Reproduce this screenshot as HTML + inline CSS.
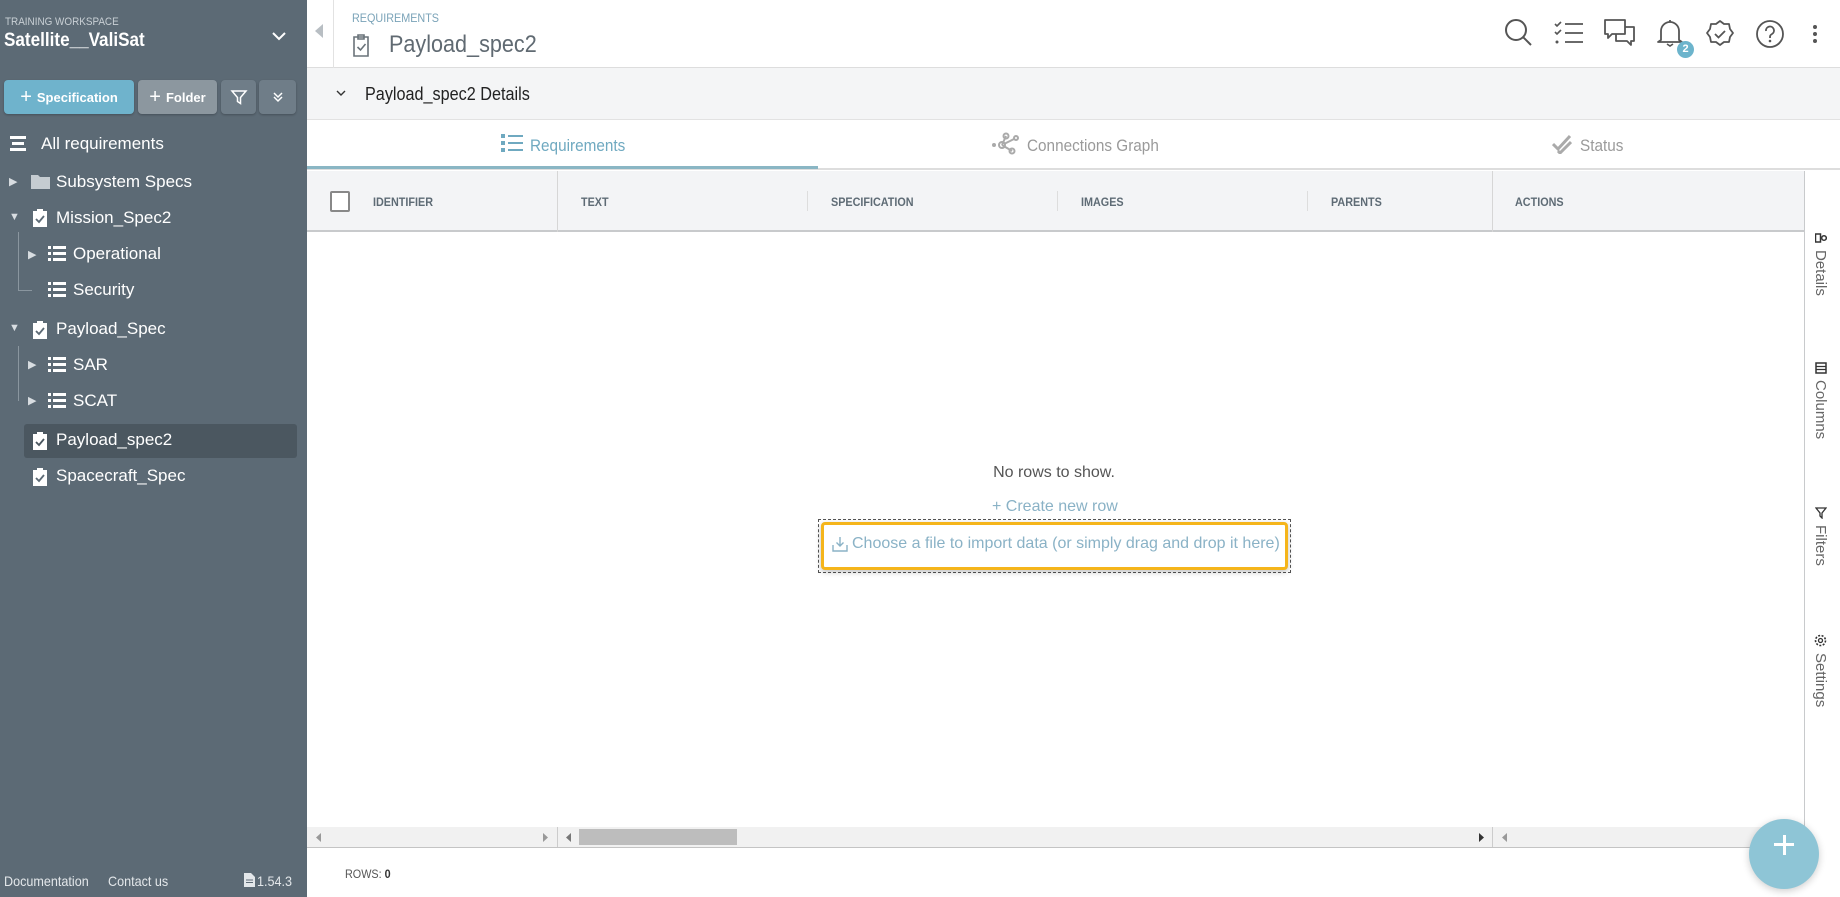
<!DOCTYPE html>
<html><head><meta charset="utf-8"><style>
*{box-sizing:border-box;margin:0;padding:0}
body{width:1840px;height:897px;overflow:hidden;font-family:"Liberation Sans",sans-serif;background:#fff;position:relative;color:#333}
.a{position:absolute}
#sb{left:0;top:0;width:307px;height:897px;background:#5c6a75;color:#fff}
.btn{position:absolute;top:80px;height:34px;border-radius:4px;color:#fff;font-size:13px;font-weight:bold;display:flex;align-items:center;justify-content:center;box-shadow:0 1px 2px rgba(0,0,0,.25)}
.ti{position:absolute;font-size:17px;color:#fff;display:flex;align-items:center;white-space:nowrap}
.tri{position:absolute;font-size:11px;color:#d8dde1}
.cond{display:inline-block;transform:scaleX(.9);transform-origin:left center}
.th{position:absolute;top:195px;font-size:12px;font-weight:bold;color:#5e6b75}
.side{position:absolute;left:1812px;writing-mode:vertical-rl;font-size:15px;color:#666;display:flex;align-items:center;gap:6px}
</style></head><body>
<div id="sb" class="a">
 <div class="a" style="left:5px;top:16px;font-size:11px;color:#c9d0d5"><span class="cond">TRAINING WORKSPACE</span></div>
 <div class="a" style="left:4px;top:30px;font-size:19px;font-weight:bold;color:#fff"><span class="cond">Satellite__ValiSat</span></div>
 <svg class="a" style="left:271px;top:30px" width="16" height="12" viewBox="0 0 16 12"><path d="M2 3l6 6 6-6" stroke="#fff" stroke-width="2" fill="none"/></svg>
 <div class="btn" style="left:4px;width:130px;background:#6fb3cc"><span style="font-size:20px;font-weight:normal;margin-right:5px">+</span>Specification</div>
 <div class="btn" style="left:138px;width:79px;background:#8c979f"><span style="font-size:20px;font-weight:normal;margin-right:5px">+</span>Folder</div>
 <div class="btn" style="left:221px;width:35px;background:#6f7d88"><svg width="18" height="18" viewBox="0 0 18 18"><path d="M2 3h14l-5.5 6.5v6l-3-2v-4z" stroke="#fff" stroke-width="1.5" fill="none"/></svg></div>
 <div class="btn" style="left:259px;width:37px;background:#6f7d88"><svg width="12" height="12" viewBox="0 0 12 12"><path d="M2 2l4 4 4-4M2 6l4 4 4-4" stroke="#fff" stroke-width="1.5" fill="none"/></svg></div>
 <svg class="a" style="left:10px;top:136px" width="16" height="16" viewBox="0 0 16 16"><rect x="0" y="0" width="16" height="3" fill="#fff"/><rect x="2" y="6" width="12" height="3" fill="#fff"/><rect x="0" y="12" width="16" height="3" fill="#fff"/></svg>
 <div class="ti" style="left:41px;top:134px">All requirements</div>
 <div class="tri" style="left:9px;top:175px">▶</div>
 <svg class="a" style="left:31px;top:174px" width="19" height="15" viewBox="0 0 19 15"><path d="M0 1h7l2 2h10v12H0z" fill="#c5ccd1"/></svg>
 <div class="ti" style="left:56px;top:172px">Subsystem Specs</div>
 <div class="tri" style="left:9px;top:211px">▼</div>
 <svg class="a" style="left:33px;top:208px" width="14" height="19" viewBox="0 0 14 19"><path d="M0 3h4V1h6v2h4v16H0z" fill="#fff"/><path d="M3 11l3 3 5-6" stroke="#5c6a75" stroke-width="1.8" fill="none"/></svg>
 <div class="ti" style="left:56px;top:208px">Mission_Spec2</div>
 <div class="a" style="left:18px;top:232px;width:1px;height:58px;background:#8a969f"></div>
 <div class="a" style="left:18px;top:290px;width:14px;height:1px;background:#8a969f"></div>
 <div class="tri" style="left:28px;top:248px">▶</div>
 <svg class="a" style="left:48px;top:246px" width="18" height="16" viewBox="0 0 18 16"><rect y="0" width="3" height="3" fill="#fff"/><rect x="5" y="0" width="13" height="3" fill="#fff"/><rect y="6" width="3" height="3" fill="#fff"/><rect x="5" y="6" width="13" height="3" fill="#fff"/><rect y="12" width="3" height="3" fill="#fff"/><rect x="5" y="12" width="13" height="3" fill="#fff"/></svg>
 <div class="ti" style="left:73px;top:244px">Operational</div>
 <svg class="a" style="left:48px;top:282px" width="18" height="16" viewBox="0 0 18 16"><rect y="0" width="3" height="3" fill="#fff"/><rect x="5" y="0" width="13" height="3" fill="#fff"/><rect y="6" width="3" height="3" fill="#fff"/><rect x="5" y="6" width="13" height="3" fill="#fff"/><rect y="12" width="3" height="3" fill="#fff"/><rect x="5" y="12" width="13" height="3" fill="#fff"/></svg>
 <div class="ti" style="left:73px;top:280px">Security</div>
 <div class="tri" style="left:9px;top:322px">▼</div>
 <svg class="a" style="left:33px;top:320px" width="14" height="19" viewBox="0 0 14 19"><path d="M0 3h4V1h6v2h4v16H0z" fill="#fff"/><path d="M3 11l3 3 5-6" stroke="#5c6a75" stroke-width="1.8" fill="none"/></svg>
 <div class="ti" style="left:56px;top:319px">Payload_Spec</div>
 <div class="a" style="left:18px;top:346px;width:1px;height:55px;background:#8a969f"></div>
 <div class="tri" style="left:28px;top:358px">▶</div>
 <svg class="a" style="left:48px;top:357px" width="18" height="16" viewBox="0 0 18 16"><rect y="0" width="3" height="3" fill="#fff"/><rect x="5" y="0" width="13" height="3" fill="#fff"/><rect y="6" width="3" height="3" fill="#fff"/><rect x="5" y="6" width="13" height="3" fill="#fff"/><rect y="12" width="3" height="3" fill="#fff"/><rect x="5" y="12" width="13" height="3" fill="#fff"/></svg>
 <div class="ti" style="left:73px;top:355px">SAR</div>
 <div class="tri" style="left:28px;top:394px">▶</div>
 <svg class="a" style="left:48px;top:393px" width="18" height="16" viewBox="0 0 18 16"><rect y="0" width="3" height="3" fill="#fff"/><rect x="5" y="0" width="13" height="3" fill="#fff"/><rect y="6" width="3" height="3" fill="#fff"/><rect x="5" y="6" width="13" height="3" fill="#fff"/><rect y="12" width="3" height="3" fill="#fff"/><rect x="5" y="12" width="13" height="3" fill="#fff"/></svg>
 <div class="ti" style="left:73px;top:391px">SCAT</div>
 <div class="a" style="left:24px;top:424px;width:273px;height:34px;background:#4b5760;border-radius:3px"></div>
 <svg class="a" style="left:33px;top:431px" width="14" height="19" viewBox="0 0 14 19"><path d="M0 3h4V1h6v2h4v16H0z" fill="#fff"/><path d="M3 11l3 3 5-6" stroke="#4b5760" stroke-width="1.8" fill="none"/></svg>
 <div class="ti" style="left:56px;top:430px">Payload_spec2</div>
 <svg class="a" style="left:33px;top:467px" width="14" height="19" viewBox="0 0 14 19"><path d="M0 3h4V1h6v2h4v16H0z" fill="#fff"/><path d="M3 11l3 3 5-6" stroke="#5c6a75" stroke-width="1.8" fill="none"/></svg>
 <div class="ti" style="left:56px;top:466px">Spacecraft_Spec</div>
 <div class="a" style="left:4px;top:873px;font-size:14px;color:#e3e7ea"><span class="cond">Documentation</span></div>
 <div class="a" style="left:108px;top:873px;font-size:14px;color:#e3e7ea"><span class="cond">Contact us</span></div>
 <svg class="a" style="left:244px;top:873px" width="11" height="14" viewBox="0 0 11 14"><path d="M0 0h7l4 4v10H0z" fill="#e3e7ea"/><path d="M2 7h7M2 9.5h7" stroke="#5c6a75"/></svg>
 <div class="a" style="left:257px;top:873px;font-size:14px;color:#e3e7ea"><span class="cond">1.54.3</span></div>
</div>

<!-- header -->
<div class="a" style="left:307px;top:0;width:1533px;height:68px;border-bottom:1px solid #ddd"></div>
<div class="a" style="left:333px;top:0;width:1px;height:68px;background:#e2e2e2"></div>
<svg class="a" style="left:315px;top:24px" width="8" height="14"><path d="M8 0v14L0 7z" fill="#b8bec3"/></svg>
<div class="a" style="left:352px;top:11px;font-size:12px;color:#7aa3b8"><span class="cond">REQUIREMENTS</span></div>
<svg class="a" style="left:351px;top:33px" width="20" height="24" viewBox="0 0 20 24"><path d="M3 4h14v19H3z M7 2h6v4H7z" stroke="#6a737a" stroke-width="1.6" fill="none"/><path d="M6.5 14l3 3 5-6" stroke="#6a737a" stroke-width="1.6" fill="none"/></svg>
<div class="a" style="left:389px;top:31px;font-size:24px;color:#606a72"><span class="cond">Payload_spec2</span></div>
<!-- top icons -->
<svg class="a" style="left:1504px;top:18px" width="30" height="30" viewBox="0 0 30 30"><circle cx="12" cy="12" r="10" stroke="#555" stroke-width="2" fill="none"/><path d="M19 19l8 8" stroke="#555" stroke-width="2"/></svg>
<svg class="a" style="left:1554px;top:20px" width="30" height="26" viewBox="0 0 30 26"><path d="M1 4l2 2 4-4M1 12l2 2 4-4" stroke="#555" stroke-width="1.6" fill="none"/><circle cx="3" cy="22" r="1.5" fill="#555"/><path d="M11 4h18M11 13h18M11 22h18" stroke="#555" stroke-width="1.8"/></svg>
<svg class="a" style="left:1603px;top:18px" width="33" height="30" viewBox="0 0 33 30"><path d="M2 2h20v14H9l-4 4v-4H2z" stroke="#555" stroke-width="1.8" fill="none" stroke-linejoin="round"/><path d="M22 9h9v14h-3v4l-4-4h-11v-7" stroke="#555" stroke-width="1.8" fill="none" stroke-linejoin="round"/></svg>
<svg class="a" style="left:1656px;top:18px" width="28" height="30" viewBox="0 0 28 30"><path d="M5 22V13a9 9 0 0 1 18 0v9l3 2H2z" stroke="#555" stroke-width="1.8" fill="none" stroke-linejoin="round"/><path d="M11 26l3 2 3-2" stroke="#555" stroke-width="1.6" fill="none"/><path d="M14 2v2" stroke="#555" stroke-width="1.8"/></svg>
<div class="a" style="left:1677px;top:41px;width:17px;height:17px;border-radius:50%;background:#6cb4cc;color:#fff;font-size:11px;font-weight:bold;text-align:center;line-height:17px">2</div>
<svg class="a" style="left:1705px;top:19px" width="30" height="30" viewBox="0 0 30 30"><path d="M15 2l4 3 5 0 1 5 3 4-3 4-1 5-5 0-4 3-4-3-5 0-1-5-3-4 3-4 1-5 5 0z" stroke="#555" stroke-width="1.8" fill="none" stroke-linejoin="round"/><path d="M10 15l3.5 3.5L20 12" stroke="#555" stroke-width="1.8" fill="none"/></svg>
<svg class="a" style="left:1755px;top:19px" width="30" height="30" viewBox="0 0 30 30"><circle cx="15" cy="15" r="13" stroke="#555" stroke-width="1.8" fill="none"/><path d="M11 12a4 4 0 1 1 6 3c-2 1-2 2-2 4" stroke="#555" stroke-width="1.8" fill="none"/><circle cx="15" cy="22" r="1.3" fill="#555"/></svg>
<svg class="a" style="left:1812px;top:24px" width="6" height="20"><circle cx="3" cy="3" r="2" fill="#555"/><circle cx="3" cy="10" r="2" fill="#555"/><circle cx="3" cy="17" r="2" fill="#555"/></svg>

<!-- details bar -->
<div class="a" style="left:307px;top:68px;width:1533px;height:52px;background:#f4f5f6;border-bottom:1px solid #e2e2e2"></div>
<svg class="a" style="left:336px;top:90px" width="10" height="7"><path d="M1 1l4 4 4-4" stroke="#333" stroke-width="1.4" fill="none"/></svg>
<div class="a" style="left:365px;top:84px;font-size:18px;color:#222"><span class="cond">Payload_spec2 Details</span></div>

<!-- tabs -->
<div class="a" style="left:307px;top:168px;width:1533px;height:2px;background:#ddd"></div>
<div class="a" style="left:307px;top:166px;width:511px;height:3px;background:#8ab6c4"></div>
<svg class="a" style="left:501px;top:134px" width="22" height="19" viewBox="0 0 22 19"><g fill="#6fa9c0"><rect width="4" height="4"/><rect x="7" y="1" width="15" height="2"/><rect y="7" width="4" height="4"/><rect x="7" y="8" width="15" height="2"/><rect y="14" width="4" height="4"/><rect x="7" y="15" width="15" height="2"/></g></svg>
<div class="a" style="left:530px;top:136px;font-size:17px;color:#6fa9c0"><span class="cond">Requirements</span></div>
<svg class="a" style="left:992px;top:132px" width="30" height="24" viewBox="0 0 30 24"><g stroke="#aaa" stroke-width="2" fill="none"><circle cx="10" cy="13" r="3"/><circle cx="20" cy="19" r="2.5"/><circle cx="14" cy="4" r="2.5"/><circle cx="24" cy="6" r="2"/><path d="M10 13l10 6M10 13l4-9M12 12l10-5"/></g><circle cx="2" cy="13" r="2" fill="#aaa"/></svg>
<div class="a" style="left:1027px;top:136px;font-size:17px;color:#9a9a9a"><span class="cond">Connections Graph</span></div>
<svg class="a" style="left:1552px;top:134px" width="20" height="20" viewBox="0 0 20 20"><path d="M1 10l5 5L18 2M6 17l2 2L19 8" stroke="#aaa" stroke-width="3" fill="none"/></svg>
<div class="a" style="left:1580px;top:136px;font-size:17px;color:#9a9a9a"><span class="cond">Status</span></div>

<!-- table header -->
<div class="a" style="left:307px;top:171px;width:1497px;height:61px;background:#f3f4f6;border-bottom:2px solid #c8cacc"></div>
<div class="a" style="left:1804px;top:171px;width:1px;height:676px;background:#c8cacc"></div>
<div class="a" style="left:330px;top:191px;width:20px;height:21px;border:2px solid #888;border-radius:2px;background:#fff"></div>
<div class="a" style="left:557px;top:171px;width:1px;height:61px;background:#d6d6d6"></div>
<div class="a" style="left:807px;top:191px;width:1px;height:20px;background:#ddd"></div>
<div class="a" style="left:1057px;top:191px;width:1px;height:20px;background:#ddd"></div>
<div class="a" style="left:1307px;top:191px;width:1px;height:20px;background:#ddd"></div>
<div class="a" style="left:1492px;top:171px;width:1px;height:61px;background:#d6d6d6"></div>
<div class="th" style="left:373px"><span class="cond">IDENTIFIER</span></div>
<div class="th" style="left:581px"><span class="cond">TEXT</span></div>
<div class="th" style="left:831px"><span class="cond">SPECIFICATION</span></div>
<div class="th" style="left:1081px"><span class="cond">IMAGES</span></div>
<div class="th" style="left:1331px"><span class="cond">PARENTS</span></div>
<div class="th" style="left:1515px"><span class="cond">ACTIONS</span></div>

<!-- side panel -->
<div class="side" style="top:232px"><svg width="12" height="12" viewBox="0 0 12 12" style="transform:rotate(90deg)"><circle cx="6" cy="3" r="2.3" stroke="#333" stroke-width="1.5" fill="none"/><rect x="2" y="6.5" width="8" height="5" stroke="#333" stroke-width="1.5" fill="none"/></svg>Details</div>
<div class="side" style="top:362px"><svg width="12" height="12" viewBox="0 0 12 12" style="transform:rotate(90deg)"><rect x="1" y="1" width="10" height="10" stroke="#333" stroke-width="1.5" fill="none"/><path d="M4.5 1v10M7.5 1v10" stroke="#333" stroke-width="1.2"/></svg>Columns</div>
<div class="side" style="top:507px"><svg width="12" height="12" viewBox="0 0 12 12"><path d="M1 1h10L7 6v5L5 9V6z" stroke="#333" stroke-width="1.3" fill="none"/></svg>Filters</div>
<div class="side" style="top:634px"><svg width="13" height="13" viewBox="0 0 13 13"><circle cx="6.5" cy="6.5" r="2" stroke="#333" stroke-width="1.3" fill="none"/><circle cx="6.5" cy="6.5" r="5" stroke="#333" stroke-width="1.6" stroke-dasharray="2 1.5" fill="none"/></svg>Settings</div>

<!-- empty state -->
<div class="a" style="left:0;width:2108px;top:464px;text-align:center;font-size:16px;color:#555"><span>No rows to show.</span></div>
<div class="a" style="left:992px;top:498px;font-size:16px;color:#8ab2c6">+ Create new row</div>
<div class="a" style="left:818px;top:519px;width:473px;height:54px;border:1px dashed #555"></div>
<div class="a" style="left:821px;top:522px;width:467px;height:48px;border:3px solid #f5b51b;border-radius:4px;box-shadow:0 2px 6px rgba(0,0,0,.25);background:#fff"></div>
<svg class="a" style="left:832px;top:536px" width="16" height="16" viewBox="0 0 16 16"><path d="M8 1v9M4.5 6.5L8 10l3.5-3.5M1 9v6h14V9" stroke="#8ab2c6" stroke-width="1.4" fill="none"/></svg>
<div class="a" style="left:852px;top:535px;font-size:16px;color:#8ab2c6">Choose a file to import data (or simply drag and drop it here)</div>

<!-- scrollbar -->
<div class="a" style="left:307px;top:827px;width:1497px;height:21px;background:#f1f1f1;border-bottom:1px solid #c4c4c4"></div>
<div class="a" style="left:557px;top:827px;width:1px;height:20px;background:#ccc"></div>
<div class="a" style="left:1492px;top:827px;width:1px;height:20px;background:#ccc"></div>
<div class="a" style="left:579px;top:829px;width:158px;height:16px;background:#bdbdbd"></div>
<svg class="a" style="left:316px;top:833px" width="5" height="9"><path d="M5 0v9L0 4.5z" fill="#999"/></svg>
<svg class="a" style="left:543px;top:833px" width="5" height="9"><path d="M0 0v9L5 4.5z" fill="#999"/></svg>
<svg class="a" style="left:566px;top:833px" width="5" height="9"><path d="M5 0v9L0 4.5z" fill="#777"/></svg>
<svg class="a" style="left:1479px;top:833px" width="5" height="9"><path d="M0 0v9L5 4.5z" fill="#333"/></svg>
<svg class="a" style="left:1502px;top:833px" width="5" height="9"><path d="M5 0v9L0 4.5z" fill="#999"/></svg>
<div class="a" style="left:345px;top:867px;font-size:12px;color:#555"><span class="cond">ROWS: <b style="color:#333">0</b></span></div>

<!-- FAB -->
<div class="a" style="left:1749px;top:819px;width:70px;height:70px;border-radius:50%;background:#8ec5d6;box-shadow:0 2px 8px rgba(0,0,0,.2)"></div>
<div class="a" style="left:1774px;top:843px;width:20px;height:3px;background:#fff"></div>
<div class="a" style="left:1782.5px;top:835px;width:3px;height:20px;background:#fff"></div>
</body></html>
